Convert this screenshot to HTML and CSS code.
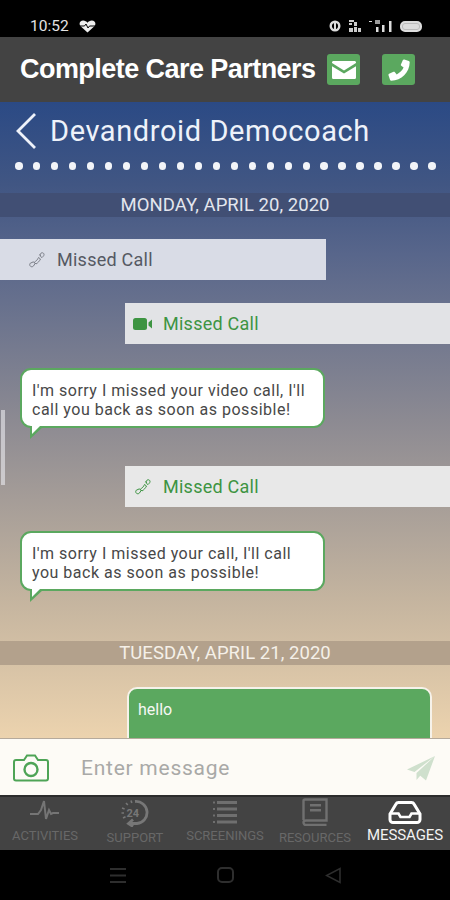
FILE: index.html
```html
<!DOCTYPE html>
<html lang="en">
<head>
<meta charset="utf-8">
<title>Complete Care Partners</title>
<link rel="stylesheet" href="styles.css">
</head>
<body>
<div class="phone">
  <div class="status">
    <div class="status-left">
      <span class="clock">10:52</span>
      <svg class="heart" width="17" height="13" viewBox="0 0 17 13"><path d="M8.5 12.5 1.600 6.300C-.6 3.800 1 .6 4.200.6c1.800 0 3.300 1 4.300 2.200C9.500 1.600 11 .6 12.800.6c3.200 0 4.800 3.200 2.600 5.700z" fill="#eee"/><path d="M1 6h4.500l1.500-2 2 4 1.500-2H16" fill="none" stroke="#000" stroke-width="1"/></svg>
    </div>
    <div class="status-right">
      <svg width="12" height="12" viewBox="0 0 12 12"><circle cx="6" cy="6" r="4.300" fill="none" stroke="#ddd" stroke-width="2.400"/><rect x="5" y="2" width="2" height="8" fill="#ddd"/></svg>
      <svg width="14" height="13" viewBox="0 0 14 13"><g fill="#ccc"><rect x="1" y="0" width="5" height="2"/><rect x="1" y="3" width="3" height="2"/><rect x="6" y="2" width="3" height="4"/><rect x="1" y="8" width="4" height="4"/><rect x="6" y="7" width="3" height="5"/><rect x="10" y="8" width="3" height="4"/></g></svg>
      <svg class="signal" width="24" height="13" viewBox="0 0 24 13"><g fill="#ddd"><rect x="0" y="1" width="3" height="1"/><rect x="6" y="0" width="5" height="4" opacity=".7"/><rect x="7" y="7" width="2.500" height="5"/><rect x="13" y="5" width="2.500" height="7"/><rect x="20" y="1" width="2.500" height="11"/></g></svg>
      <span class="battery"></span>
    </div>
  </div>

  <header class="brand">
    <h1 class="brand-name">Complete Care Partners</h1>
    <div class="brand-actions">
      <span class="action">
        <svg width="26" height="20" viewBox="0 0 26 20"><path d="M1 2.500C1 1.500 1.800 1 2.600 1h20.800c.8 0 1.600.5 1.600 1.500v.6L13 10.500 1 3.100z" fill="#fff"/><path d="M1 6.200 13 13.500 25 6.200V17.500c0 1-.8 1.500-1.600 1.500H2.600C1.800 19 1 18.500 1 17.500z" fill="#fff"/></svg>
      </span>
      <span class="action">
        <svg width="24" height="24" viewBox="0 0 24 24"><path d="M17.300 1.500 21.800 3c.6.2.9.700.9 1.300C22.500 14.500 14.500 22.500 4.300 22.700c-.6 0-1.100-.3-1.300-.9L1.500 17.300c-.2-.6.100-1.200.6-1.500l4.400-2c.5-.2 1.100-.1 1.400.4l1.800 2.300c3-1.500 5.400-3.900 6.900-6.900l-2.300-1.800c-.5-.3-.6-.9-.4-1.400l2-4.400c.3-.5.900-.8 1.400-.5z" fill="#fff"/></svg>
      </span>
    </div>
  </header>

  <main class="chat">
    <div class="chat-head">
      <svg class="back" width="22" height="38" viewBox="0 0 22 38"><path d="M20 2 3 19l17 17" fill="none" stroke="#eef2fa" stroke-width="2.800"/></svg>
      <h2 class="contact">Devandroid Democoach</h2>
    </div>
    <div class="dots">
      <i></i><i></i><i></i><i></i><i></i><i></i><i></i><i></i><i></i><i></i><i></i><i></i>
      <i></i><i></i><i></i><i></i><i></i><i></i><i></i><i></i><i></i><i></i><i></i><i></i>
    </div>

    <div class="date date-first">MONDAY, APRIL 20, 2020</div>

    <div class="call call-in">
      <svg class="call-icon" width="18" height="18" viewBox="0 0 18 18"><path d="M13 2.200c1-.8 2.300-.5 2.800.5.500 1 .1 1.800-.5 2.500l-1.300 1.400-1.700-1.400.2-1.400-1 .3zM10.500 6.500l2 1.500c-.9 2-2.600 3.800-4.500 5l-1.700-1.700 1-.8c1.300-.8 2.300-2 3.200-4zM5.500 10.800 7 12.700l-1.600 2.400c-.8.8-2 .9-2.900.2-1-.8-1-2.200-.2-3.100z" fill="none" stroke="#7c7f88" stroke-width="1"/></svg>
      <span>Missed Call</span>
    </div>

    <div class="call call-out call-video">
      <svg class="call-icon" width="20" height="14" viewBox="0 0 20 14"><rect x="0" y="1" width="14" height="12" rx="2.500" fill="#3d9442"/><path d="M15.500 5.500 19 2.500v9l-3.500-3z" fill="#3d9442"/></svg>
      <span>Missed Call</span>
    </div>

    <div class="bubble bubble-first">I'm sorry I missed your video call, I'll call you back as soon as possible!</div>

    <div class="call call-out call-voice">
      <svg class="call-icon" width="18" height="18" viewBox="0 0 18 18"><path d="M13 2.200c1-.8 2.300-.5 2.800.5.500 1 .1 1.800-.5 2.500l-1.300 1.400-1.700-1.400.2-1.400-1 .3zM10.500 6.500l2 1.500c-.9 2-2.600 3.800-4.500 5l-1.700-1.700 1-.8c1.300-.8 2.300-2 3.200-4zM5.500 10.800 7 12.700l-1.600 2.400c-.8.8-2 .9-2.900.2-1-.8-1-2.200-.2-3.100z" fill="none" stroke="#3d9442" stroke-width="1"/></svg>
      <span>Missed Call</span>
    </div>

    <div class="bubble bubble-second">I'm sorry I missed your call, I'll call you back as soon as possible!</div>

    <div class="date date-second">TUESDAY, APRIL 21, 2020</div>

    <div class="sent">hello</div>
    <div class="scroll-thumb"></div>
  </main>

  <div class="composer">
    <svg width="36" height="28" viewBox="0 0 36 28"><path d="M3 6h8l3-4.500h8L25 6h8c1 0 2 1 2 2v16.500c0 1-1 2-2 2H3c-1 0-2-1-2-2V8c0-1 1-2 2-2z" fill="none" stroke="#4ea456" stroke-width="2"/><circle cx="18" cy="15.500" r="6.500" fill="none" stroke="#4ea456" stroke-width="2.400"/></svg>
    <span class="placeholder">Enter message</span>
    <svg class="send" width="30" height="26" viewBox="0 0 30 26"><path d="M29 1 1 14.500l7.500 2.500zM29 1 11 18l9 7.500zM29 1 10.500 18v7l3.500-4z" fill="#cfe0cd"/></svg>
  </div>

  <nav class="tabs">
    <div class="tab">
      <svg width="32" height="26" viewBox="0 0 32 26"><path d="M1 15h8l3-4 3-9 2 18 3-9 2 4 2-1h6" fill="none" stroke="#757575" stroke-width="2"/></svg>
      <span>ACTIVITIES</span>
    </div>
    <div class="tab">
      <svg width="30" height="28" viewBox="0 0 30 28"><path d="M15 2.500A11 11 0 0 1 17 24.500h-8M13 20.500l-4.500 4 4.500 3" fill="none" stroke="#777" stroke-width="2.800"/><path d="M11 1.500l.8 2.500M6 4l1.800 2M2 9l2.600 1M1.500 14H4M3 19l2.500-1.200" stroke="#777" stroke-width="1.600"/><text x="6.500" y="17.500" class="badge-24">24</text></svg>
      <span>SUPPORT</span>
    </div>
    <div class="tab">
      <svg width="26" height="26" viewBox="0 0 26 26"><g fill="#6f6f6f"><rect x="5" y="2" width="20" height="3"/><rect x="5" y="8.500" width="20" height="3"/><rect x="5" y="15" width="20" height="3"/><rect x="5" y="21.500" width="20" height="3"/><rect x="1" y="2.500" width="2" height="2"/><rect x="1" y="9" width="2" height="2"/><rect x="1" y="15.500" width="2" height="2"/><rect x="1" y="22" width="2" height="2"/></g></svg>
      <span>SCREENINGS</span>
    </div>
    <div class="tab tab-resources">
      <svg width="26" height="28" viewBox="0 0 26 28"><path d="M1.500 22V3c0-1 .8-1.500 1.500-1.500h21.500v21H4c-1.500 0-2.500 1-2.500 2S2.500 27 4 27h20.500" fill="none" stroke="#707070" stroke-width="2.400"/><rect x="8" y="6" width="11" height="2.500" fill="#707070"/><rect x="8" y="11" width="11" height="2.500" fill="#707070"/></svg>
      <span>RESOURCES</span>
    </div>
    <div class="tab tab-active">
      <svg width="34" height="23" viewBox="0 0 34 23"><path d="M2 13 8 3c.5-1 1.500-1.500 2.500-1.500h13c1 0 2 .5 2.500 1.500l6 10v5.500c0 1.700-1.300 3-3 3H5c-1.700 0-3-1.300-3-3z" fill="none" stroke="#fff" stroke-width="3"/><path d="M3 12.500h7.500l2 3.500h9l2-3.500H31" fill="none" stroke="#fff" stroke-width="2.600"/></svg>
      <span>MESSAGES</span>
    </div>
  </nav>

  <div class="system-nav">
    <svg width="16" height="15" viewBox="0 0 16 15"><g fill="#2e2e2e"><rect y="0" width="16" height="2"/><rect y="6.500" width="16" height="2"/><rect y="13" width="16" height="2"/></g></svg>
    <svg width="17" height="16" viewBox="0 0 17 16"><rect x="1" y="1" width="15" height="14" rx="4" fill="none" stroke="#2e2e2e" stroke-width="2"/></svg>
    <svg width="16" height="17" viewBox="0 0 16 17"><path d="M15 1.500v14L1.500 8.500z" fill="none" stroke="#2e2e2e" stroke-width="1.600"/></svg>
  </div>
</div>
</body>
</html>
```

FILE: styles.css
```css
* { box-sizing: border-box; margin: 0; padding: 0; }

body {
  background: #000;
  font-family: Roboto, "Liberation Sans", sans-serif;
}

.phone {
  width: 450px;
  height: 900px;
  display: flex;
  flex-direction: column;
  overflow: hidden;
}

.status {
  height: 37px;
  flex: none;
  background: #000;
  display: flex;
  align-items: center;
  justify-content: space-between;
  padding: 15px 28px 0 30px;
}

.status-left, .status-right { display: flex; align-items: center; }
.status-left { gap: 10px; }
.status-right { gap: 7px; }

.clock { color: #e4e4e4; font-size: 15.500px; }

.battery {
  width: 22px;
  height: 11px;
  border-radius: 5px;
  background: #ddd;
  border: 2px solid #ddd;
  box-shadow: inset 0 0 0 1px #bbb;
}

.brand {
  height: 65px;
  flex: none;
  background: #434343;
  display: flex;
  align-items: center;
  padding: 0 35px 0 20px;
  justify-content: space-between;
}

.brand-name {
  color: #fff;
  font-family: "Liberation Sans", sans-serif;
  font-size: 27px;
  font-weight: 700;
  letter-spacing: -0.55px;
  white-space: nowrap;
}

.brand-actions { display: flex; gap: 22px; }

.action {
  width: 33px;
  height: 31px;
  background: #5ba85f;
  border-radius: 3px;
  display: flex;
  align-items: center;
  justify-content: center;
}

.chat {
  position: relative;
  height: 636px;
  flex: none;
  overflow: hidden;
  background: linear-gradient(180deg, #2b4a85 0%, #415683 13%, #58668b 24%, #8c8a92 50%, #c4b49f 78%, #ecd3ae 100%);
}

.chat-head {
  display: flex;
  align-items: center;
  gap: 13px;
  padding: 4px 0 0 15px;
  height: 54px;
}

.contact {
  color: #eef2fa;
  font-size: 29px;
  font-weight: 400;
  letter-spacing: 0.6px;
  white-space: nowrap;
}

.dots {
  display: flex;
  justify-content: space-between;
  padding: 6px 14px 0 15px;
}

.dots i {
  width: 7.500px;
  height: 7.500px;
  border-radius: 50%;
  background: #f2f4f8;
}

.date {
  height: 24px;
  font-size: 18.500px;
  line-height: 24px;
  text-align: center;
  letter-spacing: 0.05px;
}

.date-first {
  margin-top: 23px;
  background: #414f74;
  color: #e3e6ee;
}

.date-second {
  margin-top: 50px;
  background: #b3a18c;
  color: #f5f0e8;
}

.call {
  height: 41px;
  display: flex;
  align-items: center;
  padding-top: 1px;
  font-size: 18px;
  letter-spacing: 0.25px;
}

.call-in {
  width: 326px;
  margin-top: 22px;
  padding-left: 28px;
  gap: 11px;
  background: #d9dce6;
  color: #555963;
}

.call-out {
  margin-left: 125px;
  background: #e2e3e6;
  color: #3d9442;
  padding-left: 8px;
  gap: 10px;
}

.call-video { margin-top: 23px; }

.call-voice {
  margin-top: 38px;
  background: #e8e8e8;
  padding-left: 9px;
  gap: 11px;
}

.bubble {
  position: relative;
  width: 305px;
  height: 60px;
  margin-left: 20px;
  padding: 11px 10px 0;
  background: #fff;
  border: 2px solid #5ba85f;
  border-radius: 11px;
  color: #484848;
  font-size: 16px;
  line-height: 19px;
  letter-spacing: 0.5px;
}

.bubble::before {
  content: "";
  position: absolute;
  left: 8px;
  bottom: -13px;
  width: 0;
  height: 0;
  border-top: 13px solid #5ba85f;
  border-right: 14px solid transparent;
}

.bubble::after {
  content: "";
  position: absolute;
  left: 10px;
  bottom: -8px;
  width: 0;
  height: 0;
  border-top: 9px solid #fff;
  border-right: 9px solid transparent;
}

.bubble-first { margin-top: 24px; }
.bubble-second { margin-top: 24px; }

.sent {
  width: 305px;
  height: 70px;
  margin: 22px 0 0 127px;
  padding: 11px 9px;
  background: #5ba85f;
  border: 2px solid #f6f2ea;
  border-radius: 10px;
  color: #f5f7f3;
  font-size: 16px;
}

.scroll-thumb {
  position: absolute;
  left: 1px;
  top: 308px;
  width: 4px;
  height: 75px;
  background: rgba(235, 235, 240, 0.6);
}

.composer {
  height: 57px;
  flex: none;
  background: #fdfbf6;
  border-top: 1px solid #b5aa9c;
  display: flex;
  align-items: center;
  padding: 2px 14px 0 13px;
}

.placeholder {
  flex: 1;
  margin-left: 32px;
  color: #a9a9a7;
  font-size: 21px;
  letter-spacing: 0.75px;
}

.tabs {
  height: 55px;
  flex: none;
  background: #434343;
  border-top: 2px solid #2c2c2c;
  display: grid;
  grid-template-columns: repeat(5, 90px);
}

.tab {
  display: flex;
  flex-direction: column;
  align-items: center;
  padding-top: 2px;
  color: #686868;
  font-size: 13px;
  line-height: 14px;
  gap: 4px;
  white-space: nowrap;
}

.tab-resources { padding-top: 1px; gap: 5px; }

.tab-active { color: #f2f2f2; font-size: 15px; letter-spacing: -0.1px; gap: 3px; }
.tab-active svg { margin: 2px 0 1px; }

.badge-24 { font: 700 11px Roboto, sans-serif; fill: #777; }

.system-nav {
  height: 50px;
  flex: none;
  background: #000;
  display: flex;
  align-items: center;
  justify-content: center;
  gap: 91px;
}
```
